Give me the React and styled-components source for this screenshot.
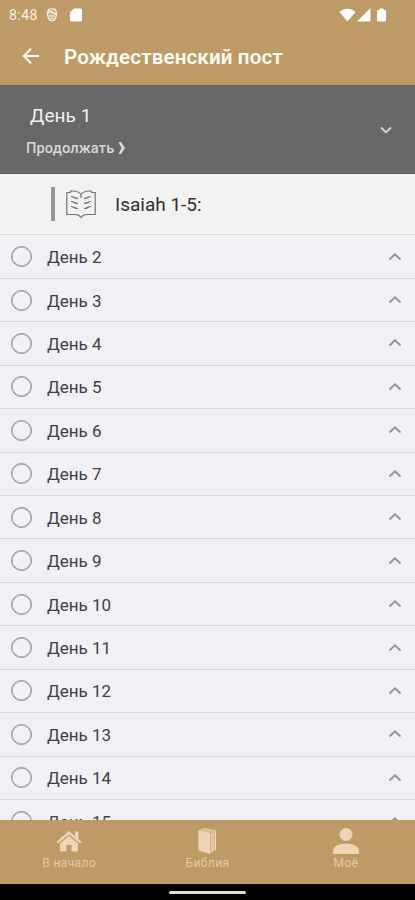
import React from "react";
import styled, { createGlobalStyle } from "styled-components";

const Global = createGlobalStyle`
  * { box-sizing: border-box; }
  body { margin: 0; background: #000; font-family: Roboto, "Noto Sans", sans-serif; }
`;

const Screen = styled.div`
  display: flex;
  flex-direction: column;
  width: 415px;
  height: 900px;
  overflow: hidden;
  background: #f1f0f5;
`;

const StatusBar = styled.div`
  display: flex;
  align-items: center;
  flex: none;
  height: 29px;
  padding: 0 28px 0 9px;
  background: #be9a66;
  color: #faf2e6;
`;

const Clock = styled.span`
  width: 37px;
  font-size: 14px;
  line-height: 20px;
  letter-spacing: 0.45px;
`;

const StatusIcons = styled.div`
  display: flex;
  align-items: center;
  gap: ${(p) => p.$gap}px;
  margin-left: ${(p) => (p.$end ? "auto" : "0")};
  color: ${(p) => (p.$end ? "#ffffff" : "inherit")};
`;

const AppBar = styled.header`
  display: flex;
  align-items: center;
  flex: none;
  height: 56px;
  padding: 0 22px 2px;
  gap: 25px;
  background: #be9a66;
  color: #fffaf2;
`;

const Title = styled.h1`
  margin: 0;
  padding-top: 1px;
  font-size: 20.6px;
  line-height: 28px;
  font-weight: 600;
  letter-spacing: 0.12px;
  white-space: nowrap;
`;

const CurrentDay = styled.section`
  display: flex;
  align-items: center;
  justify-content: space-between;
  flex: none;
  height: 89px;
  padding: 1px 22px 0 26px;
  background: #686868;
  border-bottom: 1px solid #5c5c5c;
  color: #f3f3f3;
`;

const CurrentText = styled.div`
  display: flex;
  flex-direction: column;
  gap: 9px;
  padding-top: 2px;
`;

const CurrentTitle = styled.div`
  padding-left: 4px;
  font-size: 19px;
  line-height: 26px;
  letter-spacing: 0.1px;
`;

const Continue = styled.div`
  display: flex;
  align-items: center;
  gap: 4px;
  font-size: 14.6px;
  line-height: 20px;
  font-weight: 500;
  letter-spacing: 0.15px;
  color: #d8d8d8;
`;

const Reading = styled.div`
  display: flex;
  align-items: center;
  flex: none;
  height: 60.4px;
  padding-left: 51px;
  background: #f2f2f2;
  color: #303032;
`;

const Marker = styled.span`
  width: 4px;
  height: 34px;
  margin-right: 10px;
  background: #979797;
`;

const ReadingText = styled.span`
  margin-left: 18px;
  padding-top: 1px;
  font-size: 19px;
  line-height: 26px;
`;

const Days = styled.main`
  flex: 1;
  min-height: 0;
  overflow: hidden;
`;

const DayRow = styled.div`
  display: flex;
  align-items: center;
  height: 43.44px;
  padding: 0 13px 0 11px;
  border-top: 1px solid #d9d8dd;
  color: #404043;
`;

const Circle = styled.span`
  width: 21px;
  height: 21px;
  border: 1.5px solid #929296;
  box-shadow: inset 0 0 0 0.5px #929296;
  border-radius: 50%;
`;

const DayName = styled.span`
  flex: 1;
  margin-left: 15px;
  padding-top: 1px;
  font-size: 17px;
  line-height: 22px;
`;

const TabBar = styled.nav`
  display: grid;
  grid-template-columns: repeat(3, 1fr);
  flex: none;
  height: 64px;
  background: #be9a66;
`;

const Tab = styled.div`
  display: flex;
  flex-direction: column;
  align-items: center;
  padding-top: 7px;
  color: #eed5b5;
`;

const TabLabel = styled.span`
  margin-top: 2px;
  font-size: 12px;
  line-height: 14px;
  letter-spacing: ${(p) => p.$spacing}px;
  color: #e3c9a3;
`;

const GestureBar = styled.div`
  display: flex;
  justify-content: center;
  align-items: center;
  flex: none;
  height: 16px;
  padding-top: 1px;
  background: #000;
`;

const Handle = styled.span`
  width: 77px;
  height: 3px;
  border-radius: 2px;
  background: #dedede;
`;

const Chevron = ({ down }) => (
  <svg width="14" height="10" viewBox="0 0 14 10" fill="none" stroke={down ? "#dddddd" : "#929296"} strokeWidth="1.8">
    <path d={down ? "M2 2.5 7 7.3l5-4.800" : "M1.500 7.500 7 2.300l5.500 5.200"} />
  </svg>
);

const FaceIcon = () => (
  <svg width="12" height="14" viewBox="0 0 12 14" fill="none" stroke="currentColor" strokeWidth="1.2">
    <path d="M2.500 1.500C4 .500 8 .500 9.500 1.500L10.800 6 9.500 10.500C8 13.800 4 13.800 2.500 10.500L1.200 6Z" fill="currentColor" fillOpacity=".3" />
    <path d="M1 5 4.500 3.500 10.500 6.500M3 8h6M4.500 10.500h3" />
  </svg>
);

const CardIcon = () => (
  <svg width="12" height="14" viewBox="0 0 12 14" fill="#fff">
    <path d="M4 .500h6.500Q12 .500 12 2v10q0 1.500-1.500 1.500h-9Q0 13.500 0 12V4.500Z" />
  </svg>
);

const BookLines = () => (
  <svg width="32" height="30" viewBox="0 0 32 30" fill="none" stroke="#747476" strokeWidth="1.2">
    <path d="M16 5.500C14 3 11.500 2 8 2H5.500V3.500H1.800V25.500H10C12.500 25.500 14.500 26.500 16 28.500C17.500 26.500 19.500 25.500 22 25.500H30.200V3.500H26.500V2H24C20.500 2 18 3 16 5.500Z" />
    <path d="M16 5.500V9" />
    <path d="M6 7.500c3 0 3 2 7 2M6 12.500c3 0 3 2 7 2M6 17.500c3 0 3 2 7 2M26 7.500c-3 0-3 2-7 2M26 12.500c-3 0-3 2-7 2M26 17.500c-3 0-3 2-7 2" />
  </svg>
);

const HomeIcon = () => (
  <svg width="26" height="27" viewBox="0 0 26 27" fill="currentColor">
    <path d="M13 4 25.500 14.800 24 16.600 13 7.200 2 16.600.500 14.800Z" />
    <path d="M19 4.500h3.500v8L19 9.500Z" />
    <path d="M13 8.700 22 16.400V24.500h-6.500v-6.500h-5v6.500H4v-8.100Z" />
  </svg>
);

const BibleIcon = () => (
  <svg width="20" height="27" viewBox="0 0 20 27" fill="currentColor">
    <path d="M1.500 3 13 5.800V27L1.500 23.500Z" />
    <path d="M2 2.800 7.500.800 18.500 3.200 13 5.800Z" opacity=".65" />
    <path d="m13.500 6 3.500-1.800V24l-3.500 2.500Z" opacity=".75" />
    <path d="M17.500 3.800 19 3.200V23l-1.500 1Z" />
  </svg>
);

const PersonIcon = () => (
  <svg width="26" height="27" viewBox="0 0 26 27" fill="currentColor">
    <circle cx="13" cy="7.500" r="6.500" />
    <path d="M0 27v-3c0-4.500 5.500-7.500 13-7.500s13 3 13 7.500v3Z" />
  </svg>
);

const days = Array.from({ length: 14 }, (_, i) => i + 2);

export default function App() {
  return (
    <Screen>
      <Global />
      <StatusBar>
        <Clock>8:48</Clock>
        <StatusIcons $gap={12}>
          <FaceIcon />
          <CardIcon />
        </StatusIcons>
        <StatusIcons $end $gap={1}>
          <svg width="17" height="14" viewBox="0 0 17 14" fill="currentColor"><path d="M.500 4C5-.500 12-.500 16.500 4L8.500 13.500Z" /></svg>
          <svg width="14" height="14" viewBox="0 0 14 14" fill="currentColor"><path d="M0 13.500 13.500 0v13.500Z" /></svg>
          <svg width="15" height="14" viewBox="0 0 15 14" fill="currentColor"><path d="M7.500 2V.500h4V2H13q1 0 1 1v9.500q0 1-1 1H6q-1 0-1-1V3q0-1 1-1Z" /></svg>
        </StatusIcons>
      </StatusBar>
      <AppBar>
        <svg width="17" height="16" viewBox="0 0 17 16" fill="none" stroke="currentColor" strokeWidth="2"><path d="M17 8H2M9 .800 1.800 8 9 15.200" /></svg>
        <Title>Рождественский пост</Title>
      </AppBar>
      <CurrentDay>
        <CurrentText>
          <CurrentTitle>День 1</CurrentTitle>
          <Continue>
            Продолжать
            <svg width="8" height="14" viewBox="0 0 8 14" fill="currentColor"><path d="M.500 1H3l4 6-4 6H.500l3-6Z" /></svg>
          </Continue>
        </CurrentText>
        <Chevron down />
      </CurrentDay>
      <Reading>
        <Marker />
        <BookLines />
        <ReadingText>Isaiah 1-5:</ReadingText>
      </Reading>
      <Days>
        {days.map((day) => (
          <DayRow key={day}>
            <Circle />
            <DayName>День {day}</DayName>
            <Chevron />
          </DayRow>
        ))}
      </Days>
      <TabBar>
        <Tab><HomeIcon /><TabLabel $spacing={0.4}>В начало</TabLabel></Tab>
        <Tab><BibleIcon /><TabLabel $spacing={0.4}>Библия</TabLabel></Tab>
        <Tab><PersonIcon /><TabLabel $spacing={0.4}>Моё</TabLabel></Tab>
      </TabBar>
      <GestureBar><Handle /></GestureBar>
    </Screen>
  );
}
